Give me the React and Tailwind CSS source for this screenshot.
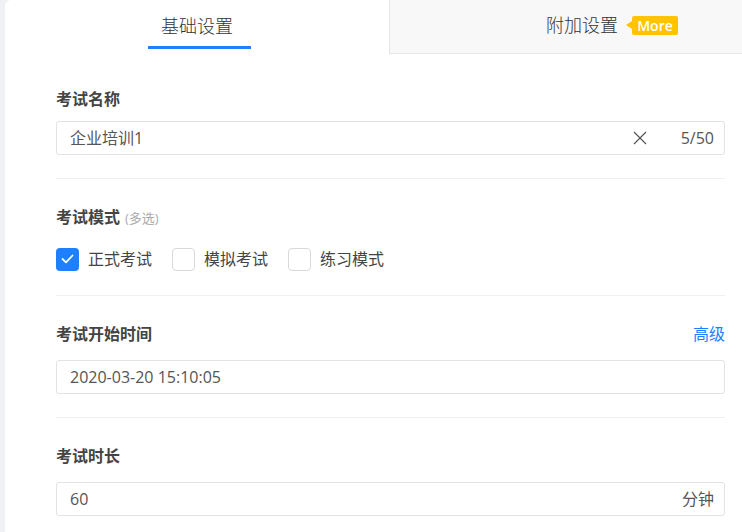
export default function App() {
  return (
    <div className="flex h-[532px] w-[742px] overflow-hidden bg-[#f0f1f5] font-['Open_Sans','Noto_Sans_CJK_SC',sans-serif] text-[#333]">
      <div className="ml-[5px] flex flex-1 flex-col rounded-tl-md bg-white">
        <div className="flex h-[54px]">
          <div className="relative flex w-[384px] items-center justify-center pb-[2px]">
            <span className="text-[18px] font-light text-[#333]">基础设置</span>
            <div className="absolute bottom-[5px] left-[143px] h-[3px] w-[103px] bg-[#1e80ff]" />
          </div>
          <div className="flex flex-1 items-center justify-center border-b border-l border-[#e6e6e6] bg-[#f8f8f8] pb-[2px] pl-[92px]">
            <span className="text-[18px] font-light text-[#333]">附加设置</span>
            <span className="relative ml-[14px] flex h-[19px] w-[46px] items-center justify-center rounded-[2px] bg-[#ffc300] text-[14px] font-semibold leading-none text-white">
              <span className="absolute left-[-6px] top-[5px] h-0 w-0 border-y-[4.5px] border-r-[6px] border-y-transparent border-r-[#ffc300]" />
              More
            </span>
          </div>
        </div>

        <div className="flex flex-col pl-[51px] pr-[17px]">
          <div className="pt-[34px] pb-[23px]">
            <div className="text-[16px] font-bold leading-[22px] text-[#444]">考试名称</div>
            <div className="mt-[11px] flex h-[34px] items-center rounded-[3px] border border-[#e3e3e3] pl-[13px] pr-[10px] text-[16px] text-[#555]">
              <span className="flex-1">企业培训1</span>
              <svg width="14" height="14" viewBox="0 0 14 14" className="mr-[34px]">
                <path d="M1 1L13 13M13 1L1 13" stroke="#555" strokeWidth="1.2" />
              </svg>
              <span>5/50</span>
            </div>
          </div>
          <div className="h-px bg-[#efefef]" />

          <div className="pt-[27px] pb-[24px]">
            <div className="flex items-baseline text-[16px] font-bold leading-[22px] text-[#444]">
              考试模式
              <span className="ml-[5px] text-[13px] font-normal text-[#aaa]">(多选)</span>
            </div>
            <div className="mt-[18px] flex items-center text-[16px] text-[#444]">
              <span className="flex h-[23px] w-[23px] items-center justify-center rounded-[4px] bg-[#1e80ff]">
                <svg width="13" height="10" viewBox="0 0 13 10">
                  <path d="M1.5 5L5 8.3L11.5 1.5" stroke="white" strokeWidth="1.8" fill="none" strokeLinecap="round" strokeLinejoin="round" />
                </svg>
              </span>
              <span className="ml-[9px]">正式考试</span>
              <span className="ml-[20px] h-[23px] w-[23px] rounded-[4px] border border-[#d9d9d9]" />
              <span className="ml-[9px]">模拟考试</span>
              <span className="ml-[20px] h-[23px] w-[23px] rounded-[4px] border border-[#d9d9d9]" />
              <span className="ml-[9px]">练习模式</span>
            </div>
          </div>
          <div className="h-px bg-[#efefef]" />

          <div className="pt-[27px] pb-[23px]">
            <div className="flex items-center justify-between text-[16px] leading-[22px]">
              <span className="font-bold text-[#444]">考试开始时间</span>
              <span className="text-[#1e80ff]">高级</span>
            </div>
            <div className="mt-[15px] flex h-[34px] items-center rounded-[3px] border border-[#e3e3e3] pl-[13px] text-[16px] text-[#555]">
              2020-03-20 15:10:05
            </div>
          </div>
          <div className="h-px bg-[#efefef]" />

          <div className="pt-[27px]">
            <div className="text-[16px] font-bold leading-[22px] text-[#444]">考试时长</div>
            <div className="mt-[15px] flex h-[34px] items-center justify-between rounded-[3px] border border-[#e3e3e3] pl-[13px] pr-[10px] text-[16px] text-[#555]">
              <span>60</span>
              <span>分钟</span>
            </div>
          </div>
        </div>
      </div>
    </div>
  );
}
